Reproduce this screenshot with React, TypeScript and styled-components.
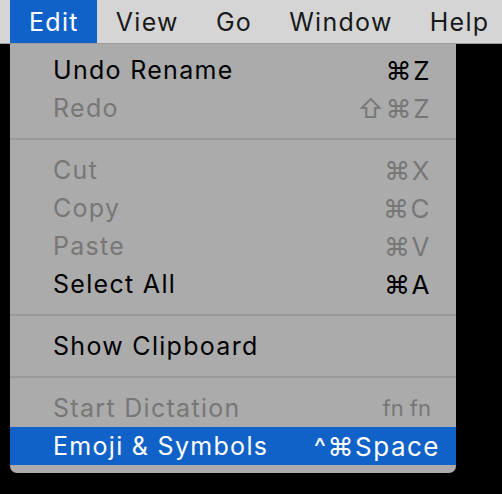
import React from 'react'
import styled, { createGlobalStyle } from 'styled-components'

type Item =
    | { kind: 'item'; label: string; shortcut?: string; disabled?: boolean; active?: boolean; small?: boolean }
    | { kind: 'separator' }

const titles = ['Edit', 'View', 'Go', 'Window', 'Help']

const items: Array<Item> = [
    { kind: 'item', label: 'Undo Rename', shortcut: '⌘Z' },
    { kind: 'item', label: 'Redo', shortcut: '⇧⌘Z', disabled: true },
    { kind: 'separator' },
    { kind: 'item', label: 'Cut', shortcut: '⌘X', disabled: true },
    { kind: 'item', label: 'Copy', shortcut: '⌘C', disabled: true },
    { kind: 'item', label: 'Paste', shortcut: '⌘V', disabled: true },
    { kind: 'item', label: 'Select All', shortcut: '⌘A' },
    { kind: 'separator' },
    { kind: 'item', label: 'Show Clipboard' },
    { kind: 'separator' },
    { kind: 'item', label: 'Start Dictation', shortcut: 'fn fn', disabled: true, small: true },
    { kind: 'item', label: 'Emoji & Symbols', shortcut: '^⌘Space', active: true },
]

export default function App() {
    return (
        <>
            <GlobalStyle />
            <Screen>
                <MenuBar>
                    {titles.map(title => (
                        <MenuTitle key={title} $open={title === 'Edit'}>
                            {title}
                        </MenuTitle>
                    ))}
                </MenuBar>
                <Menu>
                    {items.map((item, i) =>
                        item.kind === 'separator' ? (
                            <Separator key={i} />
                        ) : (
                            <Row key={i} $disabled={item.disabled} $active={item.active}>
                                <Label>{item.label}</Label>
                                {item.shortcut && <Shortcut $small={item.small}>{item.shortcut}</Shortcut>}
                            </Row>
                        )
                    )}
                </Menu>
            </Screen>
        </>
    )
}

const GlobalStyle = createGlobalStyle`
    html, body {
        margin: 0;
        background: #000;
    }
    body {
        font-family: Inter, "Liberation Sans", "DejaVu Sans", sans-serif;
        font-size: 25px;
        letter-spacing: 1.3px;
    }
`
const Screen = styled.div`
    width: 502px;
    height: 494px;
    background: #000;
    display: flex;
    flex-direction: column;
`
const MenuBar = styled.div`
    height: 43px;
    border-bottom: 1px solid #9c9c9c;
    background: #d5d5d5;
    display: flex;
    padding-left: 10px;
`
const MenuTitle = styled.div<{ $open?: boolean }>`
    display: flex;
    align-items: center;
    padding: 0 18px 0 19px;
    color: ${({ $open }) => ($open ? '#fff' : '#1a1a1a')};
    background: ${({ $open }) => ($open ? '#1162c8' : 'transparent')};
`
const Menu = styled.div`
    margin-left: 10px;
    width: 446px;
    background: #ababab;
    border-radius: 0 0 7px 7px;
    padding: 7px 0 8px;
    display: flex;
    flex-direction: column;
`
const Row = styled.div<{ $disabled?: boolean; $active?: boolean }>`
    height: 38px;
    display: flex;
    align-items: center;
    justify-content: space-between;
    padding: 0 ${({ $active }) => ($active ? 16 : 25)}px 0 43px;
    color: ${({ $disabled, $active }) => ($active ? '#fff' : $disabled ? '#777' : '#000')};
    background: ${({ $active }) => ($active ? '#1162c8' : 'transparent')};
`
const Label = styled.span``
const Shortcut = styled.span<{ $small?: boolean }>`
    font-size: ${({ $small }) => ($small ? 22 : 26)}px;
    letter-spacing: ${({ $small }) => ($small ? 0 : 1.5)}px;
`
const Separator = styled.div`
    height: 24px;
    display: flex;
    align-items: center;
    &::after {
        content: '';
        flex: 1;
        height: 2px;
        background: #9a9a9a;
    }
`
